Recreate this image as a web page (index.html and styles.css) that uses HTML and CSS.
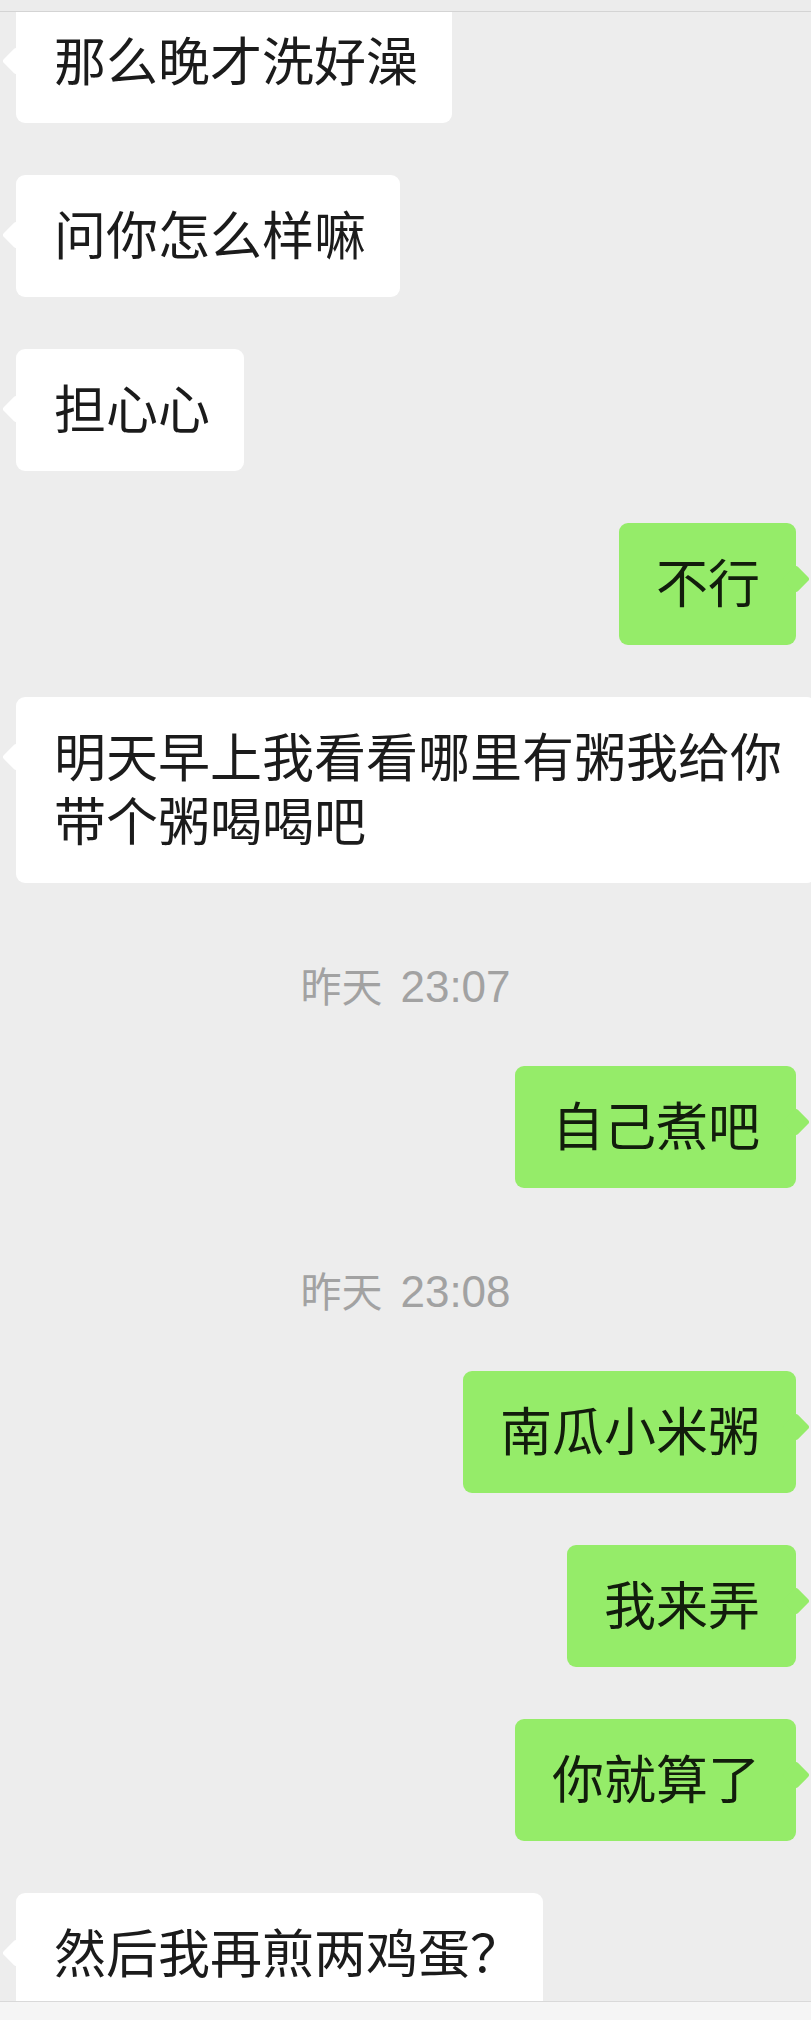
FILE: index.html
```html
<!DOCTYPE html>
<html lang="zh-CN">
<head>
<meta charset="utf-8">
<title>聊天记录</title>
<link rel="stylesheet" href="styles.css">
</head>
<body>
<div class="page">
  <div class="topbar"></div>
  <div class="chat">
    <div class="row left first"><div class="bubble">那么晚才洗好澡</div></div>
    <div class="row left"><div class="bubble">问你怎么样嘛</div></div>
    <div class="row left"><div class="bubble">担心心</div></div>
    <div class="row right"><div class="bubble">不行</div></div>
    <div class="row left"><div class="bubble wide">明天早上我看看哪里有粥我给你带个粥喝喝吧</div></div>
    <div class="time"><span class="day">昨天</span><span class="clock">23:07</span></div>
    <div class="row right"><div class="bubble">自己煮吧</div></div>
    <div class="time"><span class="day">昨天</span><span class="clock">23:08</span></div>
    <div class="row right"><div class="bubble">南瓜小米粥</div></div>
    <div class="row right"><div class="bubble">我来弄</div></div>
    <div class="row right"><div class="bubble">你就算了</div></div>
    <div class="row left"><div class="bubble punct-end">然后我再煎两鸡蛋？</div></div>
  </div>
  <div class="bottombar"></div>
</div>
</body>
</html>
```
FILE: styles.css
```css
html, body {
  margin: 0;
  padding: 0;
}
body {
  background: #ededed;
  overflow: hidden;
}
.page {
  width: 811px;
  height: 2020px;
  display: flex;
  flex-direction: column;
  overflow: hidden;
}
.topbar {
  flex: 0 0 11px;
  background: #ececec;
  border-bottom: 1px solid #d4d4d4;
}
.chat {
  flex: 1 1 auto;
  min-height: 0;
  overflow: hidden;
  display: flex;
  flex-direction: column;
  background: #ededed;
}
.bottombar {
  flex: 0 0 18px;
  background: #f5f5f5;
  border-top: 1px solid #d9d9d9;
}
.row {
  display: flex;
  margin-top: 52px;
  padding: 0 15px 0 16px;
}
.row.first {
  margin-top: -11px;
}
.row.left {
  justify-content: flex-start;
}
.row.right {
  justify-content: flex-end;
}
.bubble {
  position: relative;
  font-family: "Noto Sans CJK SC", "Noto Sans", sans-serif;
  font-size: 52px;
  line-height: 64px;
  padding: 26px 34px 32px 38px;
  border-radius: 9px;
  color: #1b1b1b;
  background: #ffffff;
  flex: 0 0 auto;
}
.bubble.wide {
  width: 728px;
}
.bubble.punct-end {
  padding-right: 21px;
}
.left .bubble::before {
  content: "";
  position: absolute;
  left: -10px;
  top: 50px;
  width: 20px;
  height: 20px;
  background: #ffffff;
  transform: rotate(45deg);
  border-radius: 3px;
}
.right .bubble {
  background: #95ec69;
  color: #121d0c;
  padding: 26px 36px 32px 37px;
}
.right .bubble::before {
  content: "";
  position: absolute;
  right: -10px;
  top: 46px;
  width: 20px;
  height: 20px;
  background: #95ec69;
  transform: rotate(45deg);
  border-radius: 3px;
}
.time {
  margin-top: 81px;
  height: 40px;
  line-height: 40px;
  text-align: center;
  color: #a2a2a2;
  font-size: 41px;
  font-family: "Liberation Sans", "Noto Sans CJK SC", sans-serif;
}
.time + .row {
  margin-top: 62px;
}
.day {
  font-family: "Noto Sans CJK SC", sans-serif;
  margin-right: 18px;
}
.clock {
  font-size: 44px;
}
```
